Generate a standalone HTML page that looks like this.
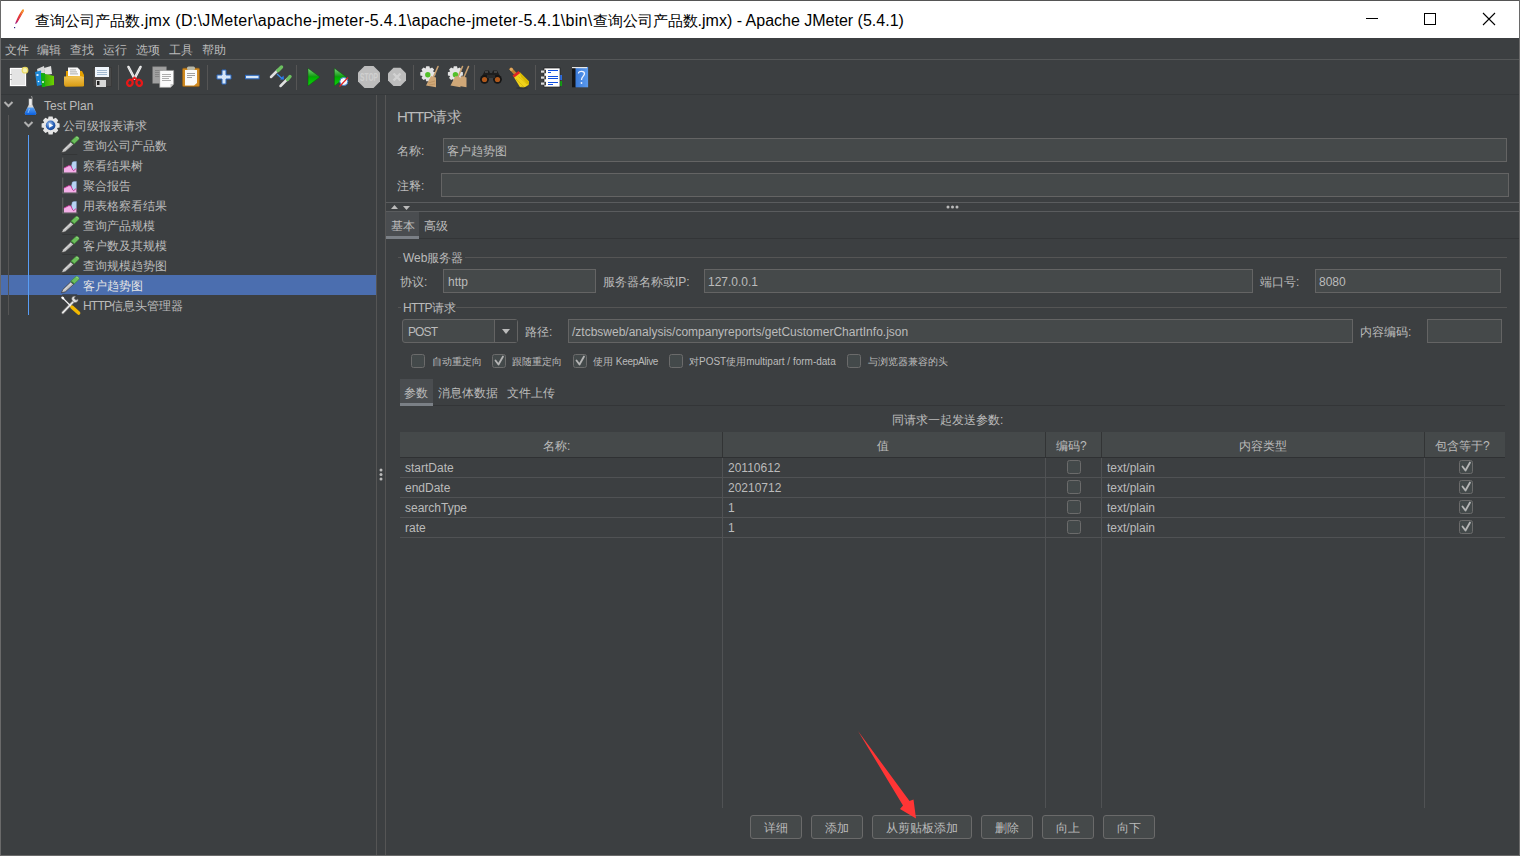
<!DOCTYPE html>
<html><head><meta charset="utf-8">
<style>
*{margin:0;padding:0;box-sizing:border-box}
html,body{width:1520px;height:856px;overflow:hidden;background:#3C3F41}
body{position:relative;font-family:"Liberation Sans",sans-serif;color:#BBBBBB;font-size:12px}
.a{position:absolute;white-space:nowrap}
#ttext{left:35px;top:10px;font-size:16px;color:#000;line-height:22px}
.t{position:absolute;white-space:nowrap;font-size:12px;line-height:14px;color:#BBBBBB;font-weight:500}
.s{font-size:10px;line-height:12px}
.btn{position:absolute;top:815px;font-weight:500;height:24px;border:1px solid #6A6A6A;border-radius:3px;background:#45494A;text-align:center;line-height:24px;font-size:12px;color:#BBBBBB}
</style></head><body>
<svg class="a" style="left:0;top:0" width="1520" height="856" viewBox="0 0 1520 856">
 <!-- title bar -->
 <rect x="1" y="1" width="1518" height="37" fill="#ffffff"/>
 <rect x="0" y="0" width="1520" height="1" fill="#555"/>
 <!-- window buttons -->
 <rect x="1366" y="18" width="12" height="1" fill="#000"/>
 <rect x="1424.5" y="13.5" width="11" height="11" fill="none" stroke="#000" stroke-width="1"/>
 <path d="M1483 13 L1495 25 M1495 13 L1483 25" stroke="#000" stroke-width="1.1"/>
 <!-- feather icon -->
 <defs><linearGradient id="gFea" x1="23" y1="9" x2="15" y2="24" gradientUnits="userSpaceOnUse"><stop offset="0" stop-color="#F7A21B"/><stop offset="0.4" stop-color="#E8402A"/><stop offset="0.75" stop-color="#D21C4C"/><stop offset="1" stop-color="#8A2A9A"/></linearGradient></defs>
 <path d="M23.8 9.2 C22.5 12 19.5 17 16.2 23.6 L15.2 24 L15.6 22.2 C17.5 17.5 20 13 22.4 9.6 Z" fill="url(#gFea)"/>
 <path d="M23.8 9.2 L24 11 C22 14.5 19 19.5 17 23 L15.4 23.8 Z" fill="url(#gFea)"/>
 <rect x="14" y="27" width="1.2" height="1.2" fill="#2A2A80"/>
 <!-- menu/toolbar separators -->
 <rect x="1" y="59" width="1518" height="1" fill="#555758"/>
 <rect x="1" y="94" width="1518" height="1" fill="#35383A"/>
 <g fill="#555">
  <rect x="118" y="65" width="1" height="25"/><rect x="207" y="65" width="1" height="25"/>
  <rect x="296" y="65" width="1" height="25"/><rect x="413" y="65" width="1" height="25"/>
  <rect x="474" y="65" width="1" height="25"/><rect x="535" y="65" width="1" height="25"/>
 </g>
 <!-- split dividers -->
 <rect x="376" y="95" width="1" height="760" fill="#555"/>
 <rect x="385" y="95" width="1" height="760" fill="#555"/>
 <circle cx="381" cy="470" r="1.5" fill="#BBB"/><circle cx="381" cy="474.5" r="1.5" fill="#BBB"/><circle cx="381" cy="479" r="1.5" fill="#BBB"/>
 <!-- tree selection -->
 <rect x="1" y="275" width="375" height="20" fill="#4B6EAF"/>
 <!-- tree lines -->
 <rect x="8" y="115" width="1" height="200" fill="#555"/>
 <rect x="28" y="135" width="1" height="180" fill="#589DF6"/>
 <!-- chevrons -->
 <path d="M4.5 102 L8.5 106 L12.5 102" stroke="#B0B0B0" stroke-width="2" fill="none"/>
 <path d="M24.5 122 L28.5 126 L32.5 122" stroke="#B0B0B0" stroke-width="2" fill="none"/>

 <!-- right panel lines -->
 <rect x="386" y="202" width="1133" height="1" fill="#5A5C5E"/>
 <rect x="386" y="211" width="1133" height="1" fill="#5A5C5E"/>
 <path d="M391 209 L394.5 205 L398 209 Z" fill="#BBB"/>
 <path d="M403 206 L406.5 210 L410 206 Z" fill="#BBB"/>
 <circle cx="948" cy="207" r="1.5" fill="#BBB"/><circle cx="952.5" cy="207" r="1.5" fill="#BBB"/><circle cx="957" cy="207" r="1.5" fill="#BBB"/>
 <!-- name/comment fields -->
 <rect x="443.5" y="138.5" width="1063" height="23" fill="#45494A" stroke="#646464"/>
 <rect x="441.5" y="173.5" width="1067" height="23" fill="#45494A" stroke="#646464"/>
 <!-- tabs basic -->
 <rect x="386" y="212" width="33" height="24" fill="#4A4D50"/>
 <rect x="386" y="236" width="33" height="3" fill="#7B8086"/>
 <rect x="419" y="238" width="1100" height="1" fill="#333537"/>
 <!-- group Web server -->
 <rect x="398" y="257" width="3" height="1" fill="#555"/>
 <rect x="465" y="257" width="1042" height="1" fill="#555"/>
 <rect x="443.5" y="269.5" width="152" height="23" fill="#45494A" stroke="#646464"/>
 <rect x="704.5" y="269.5" width="548" height="23" fill="#45494A" stroke="#646464"/>
 <rect x="1315.5" y="269.5" width="185" height="23" fill="#45494A" stroke="#646464"/>
 <!-- group HTTP request -->
 <rect x="398" y="307" width="3" height="1" fill="#555"/>
 <rect x="456" y="307" width="1051" height="1" fill="#555"/>
 <rect x="402.5" y="319.5" width="115" height="23" rx="2.5" fill="#45494A" stroke="#646464"/>
 <rect x="495" y="320" width="22" height="22" fill="#3C3F41"/>
 <rect x="494" y="320" width="1" height="22" fill="#646464"/>
 <path d="M517.5 322 L517.5 340" stroke="#646464"/>
 <path d="M502 329 L510 329 L506 334 Z" fill="#BBB"/>
 <rect x="568.5" y="319.5" width="784" height="23" fill="#45494A" stroke="#646464"/>
 <rect x="1427.5" y="319.5" width="74" height="23" fill="#45494A" stroke="#646464"/>
 <!-- checkboxes -->
 <g fill="#43494A" stroke="#6B6B6B">
  <rect x="411.5" y="354.5" width="13" height="13" rx="2"/>
  <rect x="492.5" y="354.5" width="13" height="13" rx="2"/>
  <rect x="573.5" y="354.5" width="13" height="13" rx="2"/>
  <rect x="669.5" y="354.5" width="13" height="13" rx="2"/>
  <rect x="847.5" y="354.5" width="13" height="13" rx="2"/>
 </g>
 <g fill="none" stroke="#B4B4B4" stroke-width="1.8" stroke-linecap="round" stroke-linejoin="round">
  <path d="M495.5 360.5 L498.5 364.5 L503 356.5"/>
  <path d="M576.5 360.5 L579.5 364.5 L584 356.5"/>
 </g>
 <!-- tabs params -->
 <rect x="400" y="379" width="33" height="24" fill="#4A4D50"/>
 <rect x="400" y="403" width="33" height="3" fill="#7B8086"/>
 <rect x="433" y="405" width="1072" height="1" fill="#333537"/>
 <!-- table header -->
 <rect x="400" y="432" width="1105" height="25" fill="#45494A"/>
 <rect x="400" y="457" width="1105" height="1" fill="#2F3133"/>
 <g fill="#323435">
  <rect x="722" y="432" width="1" height="25"/><rect x="1045" y="432" width="1" height="25"/>
  <rect x="1101" y="432" width="1" height="25"/><rect x="1424" y="432" width="1" height="25"/>
 </g>
 <g fill="#505254">
  <rect x="722" y="458" width="1" height="350"/><rect x="1045" y="458" width="1" height="350"/>
  <rect x="1101" y="458" width="1" height="350"/><rect x="1424" y="458" width="1" height="350"/>
  <rect x="400" y="477" width="1105" height="1"/><rect x="400" y="497" width="1105" height="1"/>
  <rect x="400" y="517" width="1105" height="1"/><rect x="400" y="537" width="1105" height="1"/>
 </g>
 <g fill="#43494A" stroke="#6B6B6B">
  <rect x="1067.5" y="460.5" width="13" height="13" rx="2"/>
  <rect x="1067.5" y="480.5" width="13" height="13" rx="2"/>
  <rect x="1067.5" y="500.5" width="13" height="13" rx="2"/>
  <rect x="1067.5" y="520.5" width="13" height="13" rx="2"/>
  <rect x="1459.5" y="460.5" width="13" height="13" rx="2"/>
  <rect x="1459.5" y="480.5" width="13" height="13" rx="2"/>
  <rect x="1459.5" y="500.5" width="13" height="13" rx="2"/>
  <rect x="1459.5" y="520.5" width="13" height="13" rx="2"/>
 </g>
 <g fill="none" stroke="#B4B4B4" stroke-width="1.8" stroke-linecap="round" stroke-linejoin="round">
  <path d="M1462.5 466.5 L1465.5 470.5 L1470 462.5"/>
  <path d="M1462.5 486.5 L1465.5 490.5 L1470 482.5"/>
  <path d="M1462.5 506.5 L1465.5 510.5 L1470 502.5"/>
  <path d="M1462.5 526.5 L1465.5 530.5 L1470 522.5"/>
 </g>
 <!-- ===== toolbar icons ===== -->
 <defs>
  <linearGradient id="gFold" x1="0" y1="0" x2="0" y2="1"><stop offset="0" stop-color="#F2C65A"/><stop offset="1" stop-color="#D89A10"/></linearGradient>
  <linearGradient id="gPlay" x1="0" y1="0" x2="0" y2="1"><stop offset="0" stop-color="#7FD27F"/><stop offset="0.5" stop-color="#0A9A0A"/><stop offset="0.51" stop-color="#00B000"/><stop offset="1" stop-color="#10D010"/></linearGradient>
  <linearGradient id="gBook" x1="0" y1="0" x2="1" y2="0"><stop offset="0" stop-color="#3A7AD8"/><stop offset="1" stop-color="#5C9CF0"/></linearGradient>
  <linearGradient id="gGreen" x1="0" y1="0" x2="1" y2="0"><stop offset="0" stop-color="#20A010"/><stop offset="1" stop-color="#70D000"/></linearGradient>
 </defs>
 <!-- new -->
 <rect x="9.5" y="67.5" width="17" height="19" fill="#FFFFFF" stroke="#2E3031" stroke-width="0.6"/>
 <rect x="11" y="69" width="14" height="16" fill="#E4E4E4"/>
 <circle cx="25" cy="70.2" r="2.8" fill="#F5F0B0" stroke="#E8D860" stroke-width="1.2"/>
 <rect x="10.5" y="74" width="1" height="1" fill="#666"/><rect x="10.5" y="79" width="1" height="1" fill="#666"/>
 <!-- templates -->
 <path d="M37 69 L44 66 L45 73 L38 75 Z" fill="#D8D8D8"/>
 <path d="M44 68 L51 66 L52 74 L45 75 Z" fill="#E0E0E0"/>
 <path d="M35 72 L41 70.5 L42 85 L37 86 Z" fill="#1C88D8"/>
 <rect x="36.5" y="74" width="2" height="2" fill="#CFE8FF"/>
 <path d="M41 73 L54 76 L54 85 L42 87 Z" fill="url(#gGreen)"/>
 <path d="M41 73 L45 73.5 L45 87 L42 87 Z" fill="#10B010"/>
 <circle cx="43" cy="82" r="0.9" fill="#fff"/><circle cx="38.5" cy="81.5" r="0.8" fill="#fff"/>
 <!-- open -->
 <path d="M66 71 L70 71 L70 70 L82 71 L84 75 L84 86 L66 86 Z" fill="#E4A000"/>
 <path d="M68 67.5 L77.5 67.5 L80 70 L80 76 L68 76 Z" fill="#FAFAFA"/>
 <g fill="#999"><rect x="70" y="69.5" width="6" height="0.8"/><rect x="70" y="71.5" width="7" height="0.8"/><rect x="70" y="73.5" width="8" height="0.8"/></g>
 <path d="M64 76.5 L80 76 L84 77 L83.5 86.5 L66 86.8 C64.5 86.5 64 85 64 84 Z" fill="url(#gFold)"/>
 <!-- save -->
 <rect x="92.5" y="67" width="19.5" height="20" rx="1" fill="#3A3A3A"/>
 <rect x="93.5" y="68" width="17.5" height="18" fill="#4A4A4A"/>
 <rect x="95" y="67" width="14" height="10" fill="#F0F6FC"/>
 <g fill="#9AB4CC"><rect x="97" y="70" width="10" height="0.9"/><rect x="97" y="72" width="10" height="0.9"/><rect x="97" y="74" width="10" height="0.9"/></g>
 <rect x="96" y="80" width="10" height="7" fill="#D8D8D8"/>
 <rect x="97" y="81" width="2.5" height="4" fill="#222"/>
 <!-- cut -->
 <path d="M128.5 67 L134.5 78.5" stroke="#F2F2F2" stroke-width="2.6" stroke-linecap="round"/>
 <path d="M140.5 67 L134.5 78.5" stroke="#F2F2F2" stroke-width="2.6" stroke-linecap="round"/>
 <path d="M128.5 67 L134.5 78.5 M140.5 67 L134.5 78.5" stroke="#BDBDBD" stroke-width="0.6"/>
 <ellipse cx="129.9" cy="82.8" rx="2.7" ry="3.1" fill="none" stroke="#E81818" stroke-width="2.3" transform="rotate(25 129.9 82.8)"/>
 <ellipse cx="139.2" cy="82.8" rx="2.7" ry="3.1" fill="none" stroke="#E81818" stroke-width="2.3" transform="rotate(-25 139.2 82.8)"/>
 <path d="M132 80 L134.5 77.5 L137 80" stroke="#E81818" stroke-width="1.8" fill="none"/>
 <!-- copy -->
 <rect x="152.7" y="66.8" width="13.7" height="16.5" fill="#A0A0A0" stroke="#7A7A7A" stroke-width="0.6"/>
 <g fill="#7F7F7F"><rect x="155" y="70" width="8" height="0.8"/><rect x="155" y="72" width="8" height="0.8"/><rect x="155" y="74" width="8" height="0.8"/><rect x="155" y="76" width="8" height="0.8"/></g>
 <path d="M159.7 70.4 L173.7 70.4 L173.7 84 L170.5 87.4 L159.7 87.4 Z" fill="#FBFBFB" stroke="#8A8A8A" stroke-width="0.6"/>
 <path d="M173.7 84 L170.5 84 L170.5 87.4 Z" fill="#C8C8C8"/>
 <g fill="#9A9A9A"><rect x="162" y="74" width="9" height="0.8"/><rect x="162" y="76" width="9" height="0.8"/><rect x="162" y="78" width="7" height="0.8"/><rect x="162" y="80" width="9" height="0.8"/></g>
 <!-- paste -->
 <rect x="182.6" y="68.2" width="16.8" height="18.4" rx="1" fill="#D08A20" stroke="#9A6010" stroke-width="0.6"/>
 <path d="M185 70 L197 70 L197 83 L194 85.5 L185 85.5 Z" fill="#FAFAFA"/>
 <rect x="187" y="66.5" width="8" height="3.5" rx="1.5" fill="#B8B8A8"/>
 <g fill="#8A8A8A"><rect x="187" y="73" width="8" height="0.8"/><rect x="187" y="75" width="8" height="0.8"/><rect x="187" y="77" width="5" height="0.8"/></g>
 <!-- plus -->
 <path d="M222 70 L226 70 L226 75 L231 75 L231 79 L226 79 L226 84 L222 84 L222 79 L217 79 L217 75 L222 75 Z" fill="#D6E6F7" stroke="#2A68C0" stroke-width="1"/>
 <!-- minus -->
 <rect x="245.5" y="75.3" width="13.5" height="3.5" fill="#D6E6F7" stroke="#2A68C0" stroke-width="1"/>
 <!-- toggle -->
 <path d="M271 77 L278 70" stroke="#E0E0E0" stroke-width="2.5" stroke-linecap="round"/>
 <path d="M278 70.5 L281.5 67" stroke="#6CC060" stroke-width="3.5" stroke-linecap="round"/>
 <path d="M280.5 86 L287.5 79" stroke="#E0E0E0" stroke-width="2.5" stroke-linecap="round"/>
 <path d="M287.5 79.5 L290 76.5" stroke="#6CC060" stroke-width="3.5" stroke-linecap="round"/>
 <path d="M277 74 L282 78.5" stroke="#3A8AE8" stroke-width="1.3"/>
 <path d="M280 79.5 L284 79.5 L283.5 75.5 Z" fill="#2A7AF0"/>
 <!-- start -->
 <path d="M308 68.2 L320 77 L308 85.9 Z" fill="url(#gPlay)" stroke="#0A5A0A" stroke-width="0.5"/>
 <!-- start no pauses -->
 <path d="M334.4 68.2 L346.3 77 L334.4 85.9 Z" fill="url(#gPlay)" stroke="#0A5A0A" stroke-width="0.5"/>
 <circle cx="343.8" cy="81.5" r="4" fill="#FAFAFA" stroke="#3A80D0" stroke-width="1"/>
 <path d="M339.5 86.5 L348 77.5" stroke="#E02020" stroke-width="1.2"/>
 <!-- stop -->
 <path d="M364.5 66 L373.5 66 L380 72.5 L380 81.5 L373.5 88 L364.5 88 L358 81.5 L358 72.5 Z" fill="#BDBDBD"/>
 <text x="360" y="80.6" font-family="Liberation Sans" font-weight="bold" font-size="11.5" fill="#D0D0D0" textLength="18" lengthAdjust="spacingAndGlyphs">STOP</text>
 <!-- shutdown -->
 <path d="M393.5 67.8 L400.5 67.8 L406 73.3 L406 80.5 L400.5 86 L393.5 86 L388 80.5 L388 73.3 Z" fill="#BDBDBD"/>
 <path d="M393.5 73.5 L400.5 80.5 M400.5 73.5 L393.5 80.5" stroke="#D2D2D2" stroke-width="2.4"/>
 <!-- clear -->
 <g transform="translate(427.8 73.8)">
  <path d="M-1.6 -7.5 L1.6 -7.5 L2.2 -5.2 L4.3 -6.3 L6.3 -4.3 L5.2 -2.2 L7.5 -1.6 L7.5 1.6 L5.2 2.2 L6.3 4.3 L4.3 6.3 L2.2 5.2 L1.6 7.5 L-1.6 7.5 L-2.2 5.2 L-4.3 6.3 L-6.3 4.3 L-5.2 2.2 L-7.5 1.6 L-7.5 -1.6 L-5.2 -2.2 L-6.3 -4.3 L-4.3 -6.3 L-2.2 -5.2 Z" fill="#E4E4E4"/>
  <circle cx="0" cy="1" r="2.7" fill="#52C02A"/>
 </g>
 <path d="M438 66.5 L433.5 77" stroke="#C8A070" stroke-width="1.6" stroke-linecap="round"/>
 <path d="M431 76 L436 77.5 L436 87.3 L426 85.5 Z" fill="#D0A878"/>
 <path d="M428 83 L435 81 M429 85 L435 84" stroke="#A88050" stroke-width="0.5"/>
 <!-- clear all -->
 <g transform="translate(455.4 73.8)">
  <path d="M-1.6 -7.5 L1.6 -7.5 L2.2 -5.2 L4.3 -6.3 L6.3 -4.3 L5.2 -2.2 L7.5 -1.6 L7.5 1.6 L5.2 2.2 L6.3 4.3 L4.3 6.3 L2.2 5.2 L1.6 7.5 L-1.6 7.5 L-2.2 5.2 L-4.3 6.3 L-6.3 4.3 L-5.2 2.2 L-7.5 1.6 L-7.5 -1.6 L-5.2 -2.2 L-6.3 -4.3 L-4.3 -6.3 L-2.2 -5.2 Z" fill="#E4E4E4"/>
  <circle cx="0" cy="1" r="2.7" fill="#52C02A"/>
 </g>
 <path d="M462.5 66.5 L458 77" stroke="#C8A070" stroke-width="1.6" stroke-linecap="round"/>
 <path d="M455.5 76 L460.5 77.5 L460.5 87.3 L450.5 85.5 Z" fill="#D0A878"/>
 <path d="M468.5 66.5 L464 77" stroke="#C8A070" stroke-width="1.6" stroke-linecap="round"/>
 <path d="M461.5 76 L466.5 77.5 L466.5 87.3 L456.5 85.5 Z" fill="#D0A878"/>
 <!-- binoculars -->
 <path d="M482 76 L485 70.5 L489 70.5 L490 73 L492 73 L493 70.5 L497 70.5 L500 76 Z" fill="#1E1E1E"/>
 <circle cx="484.5" cy="79.3" r="4.4" fill="#151515"/>
 <circle cx="497.5" cy="79.3" r="4.4" fill="#151515"/>
 <circle cx="484.5" cy="79.5" r="2.6" fill="#B0581A"/>
 <circle cx="497.5" cy="79.5" r="2.6" fill="#B0581A"/>
 <rect x="487" y="75" width="8" height="3" fill="#2A2A2A"/>
 <path d="M485 72 L488 72 M494 72 L497 72" stroke="#888" stroke-width="0.7"/>
 <!-- broom -->
 <path d="M511 69 L515.5 74" stroke="#C08030" stroke-width="3" stroke-linecap="round"/>
 <circle cx="511.3" cy="69.3" r="1.6" fill="#E0A860"/>
 <path d="M513.5 76.5 L519.5 72 L529 81.5 L528.5 85 L523.5 88 L520 87.2 Z" fill="#EFD21A"/>
 <path d="M519.5 72 L529 81.5 L528.5 85 L521 77 Z" fill="#D6B800"/>
 <path d="M512.5 75.5 L518.5 71 L520.3 73 L514.3 77.5 Z" fill="#E02424"/>
 <path d="M516 79 L524 87 M518.5 76.5 L527 84" stroke="#C8A400" stroke-width="0.5"/>
 <ellipse cx="522" cy="88" rx="6" ry="1.2" fill="#2C2E30" opacity="0.6"/>
 <!-- function helper -->
 <rect x="544" y="68" width="16" height="19" fill="#FFFFFF" stroke="#1E1E1E" stroke-width="0.7"/>
 <g fill="#1050E0"><rect x="548" y="70" width="10" height="1"/><rect x="548" y="72" width="3" height="1"/><rect x="548" y="76" width="10" height="1"/><rect x="548" y="78" width="10" height="1"/><rect x="548" y="82" width="10" height="1"/><rect x="548" y="84" width="5" height="1"/></g>
 <g fill="#DADADA"><rect x="541" y="70.5" width="4" height="2.2"/><rect x="541" y="76.5" width="4" height="2.2"/><rect x="541" y="82.5" width="4" height="2.2"/></g>
 <g fill="#111"><rect x="544.5" y="69.8" width="1.3" height="3.5"/><rect x="544.5" y="75.8" width="1.3" height="3.5"/><rect x="544.5" y="81.8" width="1.3" height="3.5"/></g>
 <rect x="560.2" y="75" width="1.8" height="5" fill="#2C6CE0"/>
 <rect x="560.2" y="81" width="1.8" height="5" fill="#10A010"/>
 <!-- help -->
 <rect x="572" y="67" width="4" height="20.3" fill="#151515"/>
 <rect x="575.5" y="67" width="12.6" height="20.3" fill="url(#gBook)"/>
 <rect x="572" y="67" width="15" height="1.2" fill="#E8E8E8"/>
 <path d="M578.5 73.5 C578.5 70.5 584.5 70.5 584.5 73.8 C584.5 76 581.5 76.5 581.5 80" stroke="#F0F4FF" stroke-width="1.3" fill="none"/>
 <circle cx="581.5" cy="83" r="0.9" fill="#F0F4FF"/>

 <!-- ===== tree icons ===== -->
 <defs>
  <linearGradient id="gLiq" x1="0" y1="0" x2="0" y2="1"><stop offset="0" stop-color="#5AA0F0"/><stop offset="1" stop-color="#0A60E0"/></linearGradient>
  <radialGradient id="gBall" cx="0.4" cy="0.35" r="0.7"><stop offset="0" stop-color="#A8C8F0"/><stop offset="0.6" stop-color="#2A62B8"/><stop offset="1" stop-color="#123E8A"/></radialGradient>
  <g id="dropper">
   <path d="M0.2 16.6 L1.6 13.2 L9.6 5.6 L12.4 8.2 L4.2 15.6 Z" fill="#BFBFBF" stroke="#3A3A3A" stroke-width="0.7"/>
   <path d="M2.4 14.4 L10.2 7" stroke="#F4F4F4" stroke-width="1" stroke-dasharray="1.2 0.6"/>
   <path d="M9.6 5 L14.4 0.6 C16 -0.7 18.8 1.8 17.6 3.4 L12.8 7.9 Z" fill="#6CBF5C" stroke="#3A8A30" stroke-width="0.6"/>
   <path d="M15 1 C16 0.4 17.4 1.4 17 2.4" stroke="#A8E098" stroke-width="0.8" fill="none"/>
   <path d="M10.4 5.2 L13 7.6" stroke="#2E6E28" stroke-width="0.9"/>
   <rect x="1" y="17.8" width="15" height="1" fill="#2E3031" opacity="0.6"/>
  </g>
  <g id="chart">
   <rect x="0" y="0" width="0.8" height="15.7" fill="#707070"/>
   <rect x="0" y="15" width="15.4" height="0.8" fill="#707070"/>
   <path d="M9 8.5 L10 4.5 C11 3.8 12.5 3.8 14 3.8 L14 11.5 L11 13.5 L9.5 11 Z" fill="#B8D4F4" stroke="#8EB4E4" stroke-width="0.4"/>
   <path d="M1.5 15 L1.5 10.5 L6.5 8 L8.5 8.3 L10.3 12.3 L11.3 13.2 L13 11.3 L14 11.3 L14 15 Z" fill="#F4B0E8"/>
   <path d="M1.5 10.5 L6.5 8 L8.5 8.3 L10.3 12.3 L11.3 13.2 L13 11.3 L14 11.3" stroke="#C02890" stroke-width="0.8" fill="none"/>
  </g>
 </defs>
 <!-- flask -->
 <path d="M31.5 96 L32.5 99" stroke="#A0A0A0" stroke-width="0.9"/>
 <path d="M28.6 98.6 L32.6 98.6 L32.6 104.5 L36.2 112.8 C36.6 114 35.8 114.9 34.6 114.9 L26.4 114.9 C25.2 114.9 24.5 114 24.9 112.8 L28.6 104.5 Z" fill="#D8D8D8" stroke="#2E3031" stroke-width="0.4"/>
 <path d="M29.6 99 L30.6 99 L30.6 105 L29.6 105 Z" fill="#FFFFFF"/>
 <path d="M27.6 107.6 L33.6 107.6 L36.2 112.8 C36.6 114 35.8 114.9 34.6 114.9 L26.4 114.9 C25.2 114.9 24.5 114 24.9 112.8 Z" fill="url(#gLiq)"/>
 <path d="M28.5 109 L29.5 109 L28 113" stroke="#A8D0FF" stroke-width="0.7" fill="none"/>
 <!-- gear with play -->
 <g transform="translate(50.6 125.4)">
  <path d="M-2 -9 L2 -9 L2.6 -6.4 L5.2 -7.6 L7.6 -5.2 L6.4 -2.6 L9 -2 L9 2 L6.4 2.6 L7.6 5.2 L5.2 7.6 L2.6 6.4 L2 9 L-2 9 L-2.6 6.4 L-5.2 7.6 L-7.6 5.2 L-6.4 2.6 L-9 2 L-9 -2 L-6.4 -2.6 L-7.6 -5.2 L-5.2 -7.6 L-2.6 -6.4 Z" fill="#E6E6E6"/>
  <circle cx="0" cy="0" r="4.8" fill="url(#gBall)"/>
  <path d="M-1.5 -2.3 L2.6 0 L-1.5 2.3 Z" fill="#FFFFFF"/>
 </g>
 <!-- samplers -->
 <use href="#dropper" x="61.2" y="136.2"/>
 <use href="#dropper" x="61.2" y="216.2"/>
 <use href="#dropper" x="61.2" y="236.2"/>
 <use href="#dropper" x="61.2" y="256.2"/>
 <use href="#dropper" x="61.2" y="276.2"/>
 <!-- listeners -->
 <use href="#chart" x="62.4" y="157.6"/>
 <use href="#chart" x="62.4" y="177.6"/>
 <use href="#chart" x="62.4" y="197.6"/>
 <!-- header manager tools -->
 <path d="M62.8 312.6 L73 302" stroke="#707070" stroke-width="3.2" stroke-linecap="round"/>
 <path d="M62.8 312.6 L73 302" stroke="#EDEDED" stroke-width="1.6" stroke-linecap="round"/>
 <path d="M72 300 C71 297.5 73 295.8 75.5 296.5 L74 298.3 L76 300.2 L78 299 C78.5 301.5 76.5 303 74 302.5 Z" fill="#E0E0E0" stroke="#707070" stroke-width="0.6"/>
 <path d="M62.4 297.6 L71 306.2" stroke="#F2F2F2" stroke-width="1.3" stroke-linecap="round"/>
 <path d="M62.4 297.6 L63.2 298.4" stroke="#FFFFFF" stroke-width="2.2" stroke-linecap="round"/>
 <path d="M72 307.2 L78.6 313" stroke="#F2B800" stroke-width="3.6" stroke-linecap="round"/>

 <!-- window border -->
 <rect x="0" y="0" width="1" height="856" fill="#6A6A6A"/>
 <rect x="1519" y="0" width="1" height="856" fill="#6A6A6A"/>
 <rect x="0" y="855" width="1520" height="1" fill="#6A6A6A"/>
</svg>

<div id="ttext" class="a"><span style="font-size:15px">查询公司产品数</span><span style="letter-spacing:0.31px">.jmx (D:\JMeter\apache-jmeter-5.4.1\apache-jmeter-5.4.1\bin\</span><span style="font-size:15px">查询公司产品数</span>.jmx) - Apache JMeter (5.4.1)</div>

<!-- menu -->
<div class="t" style="left:5px;top:43px">文件</div>
<div class="t" style="left:37px;top:43px">编辑</div>
<div class="t" style="left:70px;top:43px">查找</div>
<div class="t" style="left:103px;top:43px">运行</div>
<div class="t" style="left:136px;top:43px">选项</div>
<div class="t" style="left:169px;top:43px">工具</div>
<div class="t" style="left:202px;top:43px">帮助</div>

<!-- tree -->
<div class="t" style="left:44px;top:99px">Test Plan</div>
<div class="t" style="left:63px;top:119px">公司级报表请求</div>
<div class="t" style="left:83px;top:139px">查询公司产品数</div>
<div class="t" style="left:83px;top:159px">察看结果树</div>
<div class="t" style="left:83px;top:179px">聚合报告</div>
<div class="t" style="left:83px;top:199px">用表格察看结果</div>
<div class="t" style="left:83px;top:219px">查询产品规模</div>
<div class="t" style="left:83px;top:239px">客户数及其规模</div>
<div class="t" style="left:83px;top:259px">查询规模趋势图</div>
<div class="t" style="left:83px;top:279px;color:#E4E4E4">客户趋势图</div>
<div class="t" style="left:83px;top:299px"><span style="letter-spacing:-0.8px">HTTP</span>信息头管理器</div>

<!-- right panel -->
<div class="t" style="left:397px;top:108px;font-size:15px;line-height:18px"><span style="letter-spacing:-1px">HTTP</span>请求</div>
<div class="t" style="left:397px;top:144px">名称:</div>
<div class="t" style="left:447px;top:144px">客户趋势图</div>
<div class="t" style="left:397px;top:179px">注释:</div>
<div class="t" style="left:391px;top:219px">基本</div>
<div class="t" style="left:424px;top:219px">高级</div>

<div class="t" style="left:403px;top:251px">Web服务器</div>
<div class="t" style="left:400px;top:275px">协议:</div>
<div class="t" style="left:448px;top:275px">http</div>
<div class="t" style="left:603px;top:275px">服务器名称或IP:</div>
<div class="t" style="left:708px;top:275px">127.0.0.1</div>
<div class="t" style="left:1260px;top:275px">端口号:</div>
<div class="t" style="left:1319px;top:275px">8080</div>

<div class="t" style="left:403px;top:301px"><span style="letter-spacing:-0.6px">HTTP</span>请求</div>
<div class="t" style="left:408px;top:325px"><span style="letter-spacing:-0.9px">POST</span></div>
<div class="t" style="left:525px;top:325px">路径:</div>
<div class="t" style="left:572px;top:325px">/ztcbsweb/analysis/companyreports/getCustomerChartInfo.json</div>
<div class="t" style="left:1360px;top:325px">内容编码:</div>

<div class="t s" style="left:432px;top:356px">自动重定向</div>
<div class="t s" style="left:512px;top:356px">跟随重定向</div>
<div class="t s" style="left:593px;top:356px">使用 <span style="letter-spacing:-0.3px">KeepAlive</span></div>
<div class="t s" style="left:689px;top:356px">对POST使用multipart / form-data</div>
<div class="t s" style="left:868px;top:356px">与浏览器兼容的头</div>

<div class="t" style="left:404px;top:386px">参数</div>
<div class="t" style="left:438px;top:386px">消息体数据</div>
<div class="t" style="left:507px;top:386px">文件上传</div>

<div class="t" style="left:892px;top:413px">同请求一起发送参数:</div>

<div class="t" style="left:543px;top:439px">名称:</div>
<div class="t" style="left:877px;top:439px">值</div>
<div class="t" style="left:1056px;top:439px">编码?</div>
<div class="t" style="left:1239px;top:439px">内容类型</div>
<div class="t" style="left:1435px;top:439px">包含等于?</div>

<div class="t" style="left:405px;top:461px">startDate</div>
<div class="t" style="left:405px;top:481px">endDate</div>
<div class="t" style="left:405px;top:501px">searchType</div>
<div class="t" style="left:405px;top:521px">rate</div>
<div class="t" style="left:728px;top:461px">20110612</div>
<div class="t" style="left:728px;top:481px">20210712</div>
<div class="t" style="left:728px;top:501px">1</div>
<div class="t" style="left:728px;top:521px">1</div>
<div class="t" style="left:1107px;top:461px">text/plain</div>
<div class="t" style="left:1107px;top:481px">text/plain</div>
<div class="t" style="left:1107px;top:501px">text/plain</div>
<div class="t" style="left:1107px;top:521px">text/plain</div>

<!-- buttons -->
<div class="btn" style="left:750px;width:52px">详细</div>
<div class="btn" style="left:811px;width:52px">添加</div>
<div class="btn" style="left:872px;width:100px">从剪贴板添加</div>
<div class="btn" style="left:981px;width:52px">删除</div>
<div class="btn" style="left:1042px;width:52px">向上</div>
<div class="btn" style="left:1103px;width:52px">向下</div>

<svg class="a" style="left:0;top:0" width="1520" height="856" viewBox="0 0 1520 856">
 <path d="M858 731 L909.5 801 L913.5 799.5 L916 818.5 L900 809 L903 805.5 Z" fill="#FF3535"/>
</svg>
</body></html>
